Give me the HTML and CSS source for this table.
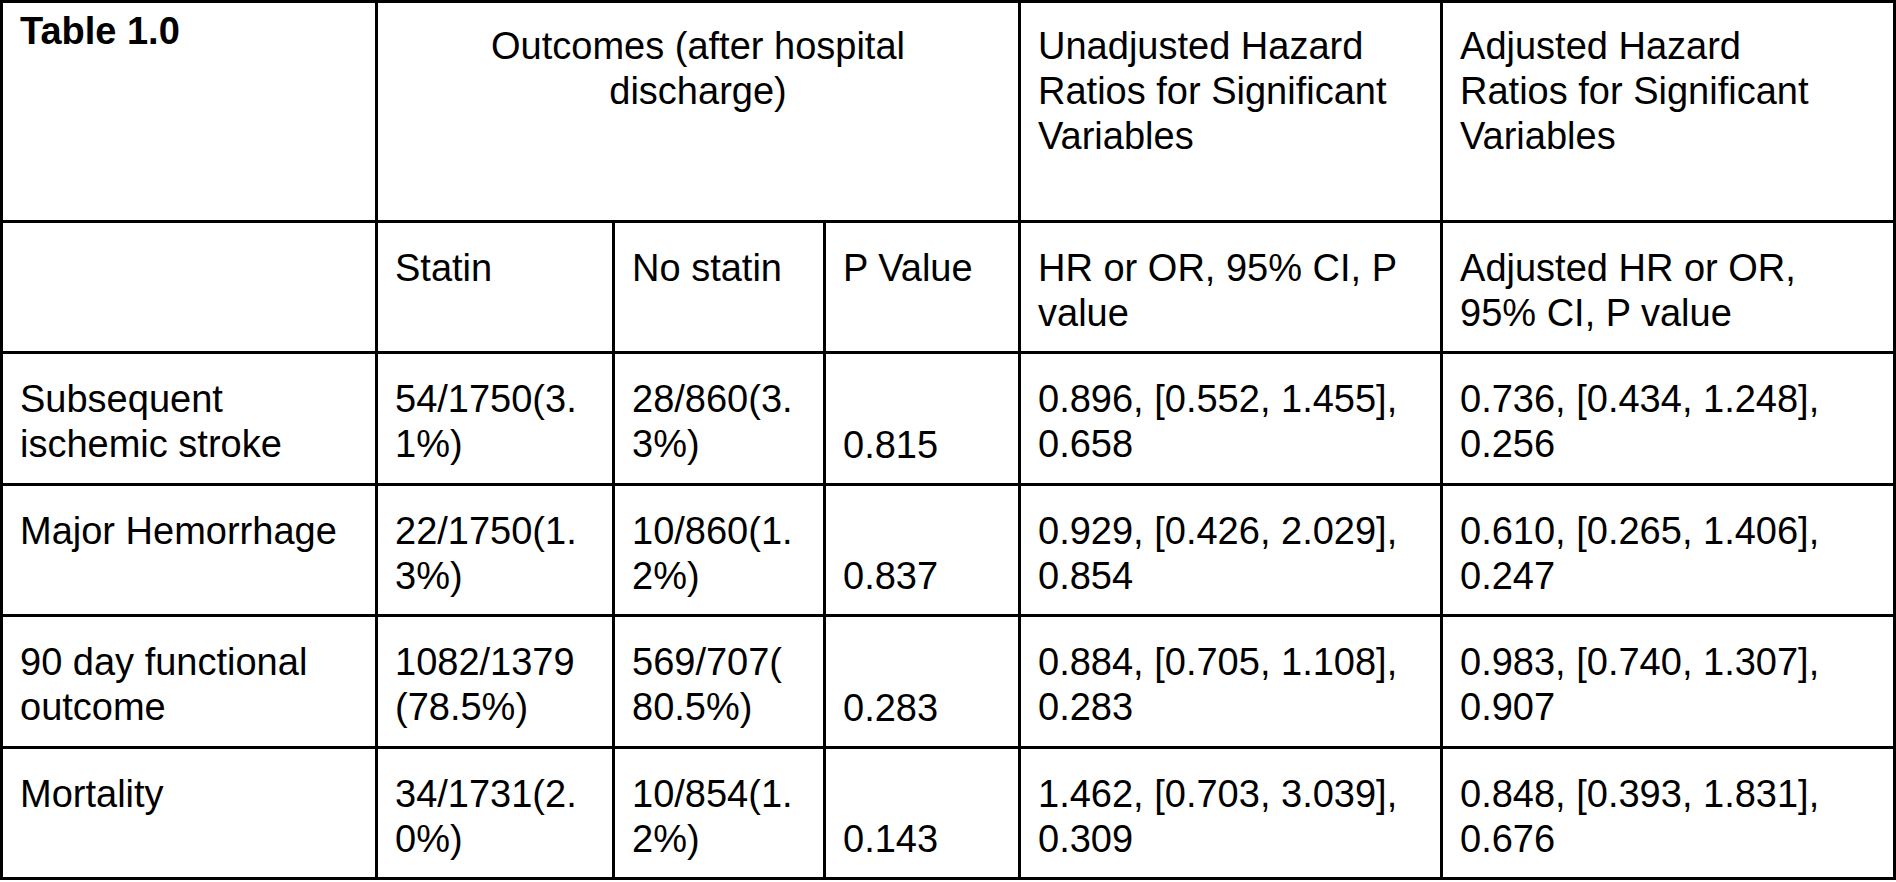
FILE: index.html
```html
<!DOCTYPE html>
<html lang="en">
<head>
<meta charset="utf-8">
<title>Table 1.0</title>
<link rel="stylesheet" href="styles.css">
</head>
<body>
<table class="grid">
  <colgroup>
    <col class="w1"><col class="w2"><col class="w3"><col class="w4"><col class="w5"><col class="w6">
  </colgroup>
  <tr class="row-head">
    <th class="cell head title">Table 1.0</th>
    <th class="cell head center" colspan="3">Outcomes (after hospital<br>discharge)</th>
    <th class="cell head">Unadjusted Hazard<br>Ratios for Significant<br>Variables</th>
    <th class="cell head">Adjusted Hazard<br>Ratios for Significant<br>Variables</th>
  </tr>
  <tr class="row-sub">
    <td class="cell"></td>
    <td class="cell">Statin</td>
    <td class="cell">No statin</td>
    <td class="cell">P Value</td>
    <td class="cell">HR or OR, 95% CI, P<br>value</td>
    <td class="cell">Adjusted HR or OR,<br>95% CI, P value</td>
  </tr>
  <tr class="row-a">
    <td class="cell">Subsequent<br>ischemic stroke</td>
    <td class="cell">54/1750(3.<br>1%)</td>
    <td class="cell">28/860(3.<br>3%)</td>
    <td class="cell bottom">0.815</td>
    <td class="cell">0.896, [0.552, 1.455],<br>0.658</td>
    <td class="cell">0.736, [0.434, 1.248],<br>0.256</td>
  </tr>
  <tr class="row-b">
    <td class="cell">Major Hemorrhage</td>
    <td class="cell">22/1750(1.<br>3%)</td>
    <td class="cell">10/860(1.<br>2%)</td>
    <td class="cell bottom">0.837</td>
    <td class="cell">0.929, [0.426, 2.029],<br>0.854</td>
    <td class="cell">0.610, [0.265, 1.406],<br>0.247</td>
  </tr>
  <tr class="row-a">
    <td class="cell">90 day functional<br>outcome</td>
    <td class="cell">1082/1379<br>(78.5%)</td>
    <td class="cell">569/707(<br>80.5%)</td>
    <td class="cell bottom">0.283</td>
    <td class="cell">0.884, [0.705, 1.108],<br>0.283</td>
    <td class="cell">0.983, [0.740, 1.307],<br>0.907</td>
  </tr>
  <tr class="row-b">
    <td class="cell">Mortality</td>
    <td class="cell">34/1731(2.<br>0%)</td>
    <td class="cell">10/854(1.<br>2%)</td>
    <td class="cell bottom">0.143</td>
    <td class="cell">1.462, [0.703, 3.039],<br>0.309</td>
    <td class="cell">0.848, [0.393, 1.831],<br>0.676</td>
  </tr>
</table>
</body>
</html>
```
FILE: styles.css
```css
html, body {
  margin: 0;
  padding: 0;
  background: #ffffff;
}

body {
  font-family: "Liberation Sans", Arial, sans-serif;
  color: #000000;
  overflow: hidden;
}

.grid {
  width: 1896px;
  table-layout: fixed;
  border-collapse: separate;
  border-spacing: 0;
  border-left: 3px solid #000;
  border-top: 3px solid #000;
  box-sizing: border-box;
}

.w1 { width: 375px; }
.w2 { width: 237px; }
.w3 { width: 211px; }
.w4 { width: 195px; }
.w5 { width: 422px; }
.w6 { width: 453px; }

.cell {
  border-right: 3px solid #000;
  border-bottom: 3px solid #000;
  padding: 23px 17px 15px 17px;
  font-size: 38px;
  line-height: 45px;
  font-weight: normal;
  text-align: left;
  vertical-align: top;
  white-space: nowrap;
}

.head {
  padding-top: 21px;
}

.title {
  font-weight: bold;
  padding-top: 6px;
}

.center {
  text-align: center;
}

.bottom {
  vertical-align: bottom;
}

.row-head {
  height: 220px;
}

.row-sub {
  height: 131px;
}

.row-a {
  height: 132px;
}

.row-b {
  height: 131px;
}
```
